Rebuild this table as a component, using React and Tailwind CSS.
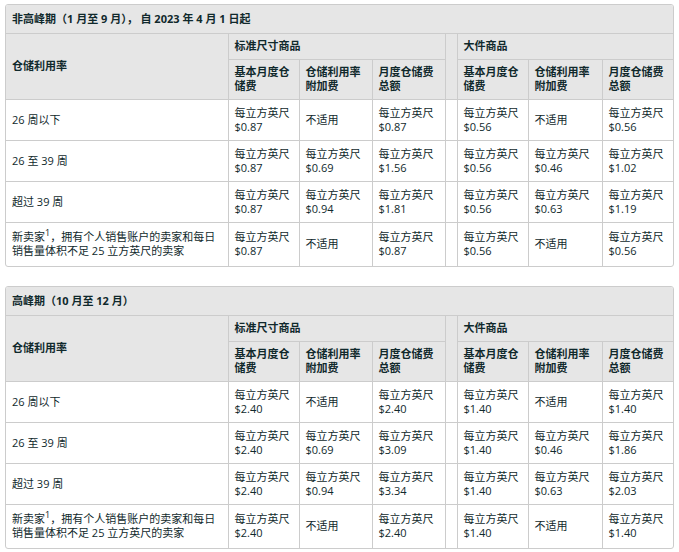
import React from "react";

const NA = "不适用";

const tables = [
  {
    title: "非高峰期（1 月至 9 月）， 自 2023 年 4 月 1 日起",
    rows: [
      ["26 周以下", "$0.87", NA, "$0.87", "$0.56", NA, "$0.56"],
      ["26 至 39 周", "$0.87", "$0.69", "$1.56", "$0.56", "$0.46", "$1.02"],
      ["超过 39 周", "$0.87", "$0.94", "$1.81", "$0.56", "$0.63", "$1.19"],
      ["NEW", "$0.87", NA, "$0.87", "$0.56", NA, "$0.56"],
    ],
  },
  {
    title: "高峰期（10 月至 12 月）",
    rows: [
      ["26 周以下", "$2.40", NA, "$2.40", "$1.40", NA, "$1.40"],
      ["26 至 39 周", "$2.40", "$0.69", "$3.09", "$1.40", "$0.46", "$1.86"],
      ["超过 39 周", "$2.40", "$0.94", "$3.34", "$1.40", "$0.63", "$2.03"],
      ["NEW", "$2.40", NA, "$2.40", "$1.40", NA, "$1.40"],
    ],
  },
];

const cell = "border border-[#cccccc] px-[6px] py-0 align-middle text-left";
const head = "bg-[#e6e6e6] font-bold";

function Val({ v }) {
  if (v === NA) return <span>{NA}</span>;
  return (
    <span>
      每立方英尺
      <br />
      {v}
    </span>
  );
}

function FeeHeads() {
  return (
    <>
      <th className={`${cell} ${head}`}>
        基本月度仓
        <br />
        储费
      </th>
      <th className={`${cell} ${head}`}>
        仓储利用率
        <br />
        附加费
      </th>
      <th className={`${cell} ${head}`}>
        月度仓储费
        <br />
        总额
      </th>
    </>
  );
}

function Table({ title, rows, className }) {
  return (
    <div
      className={`ml-[5px] w-[669px] border border-[#cccccc] rounded-[3px] overflow-hidden ${className}`}
    >
      <table className="w-[667px] table-fixed border-collapse border-hidden">
        <colgroup>
          <col className="w-[222px]" />
          <col className="w-[71px]" />
          <col className="w-[73px]" />
          <col className="w-[73px]" />
          <col className="w-[12px]" />
          <col className="w-[71px]" />
          <col className="w-[74px]" />
          <col className="w-[71px]" />
        </colgroup>
        <thead>
          <tr className="h-[28px]">
            <th colSpan={8} className={`${cell} ${head}`}>
              {title}
            </th>
          </tr>
          <tr className="h-[26px]">
            <th rowSpan={2} className={`${cell} ${head}`}>
              仓储利用率
            </th>
            <th colSpan={3} className={`${cell} ${head}`}>
              标准尺寸商品
            </th>
            <th rowSpan={2} className={`${cell} ${head} px-0`}></th>
            <th colSpan={3} className={`${cell} ${head}`}>
              大件商品
            </th>
          </tr>
          <tr className="h-[40px]">
            <FeeHeads />
            <FeeHeads />
          </tr>
        </thead>
        <tbody>
          {rows.map((r, i) => (
            <tr key={i} className={i === 3 ? "h-[44px]" : "h-[41px]"}>
              <td className={cell}>
                {r[0] === "NEW" ? (
                  <span>
                    新卖家
                    <span className="relative -top-[5px] text-[9px] leading-none">1</span>
                    ，拥有个人销售账户的卖家和每日
                    <br />
                    销售量体积不足 25 立方英尺的卖家
                  </span>
                ) : (
                  r[0]
                )}
              </td>
              <td className={cell}>
                <Val v={r[1]} />
              </td>
              <td className={cell}>
                <Val v={r[2]} />
              </td>
              <td className={cell}>
                <Val v={r[3]} />
              </td>
              <td className={`${cell} px-0`}></td>
              <td className={cell}>
                <Val v={r[4]} />
              </td>
              <td className={cell}>
                <Val v={r[5]} />
              </td>
              <td className={cell}>
                <Val v={r[6]} />
              </td>
            </tr>
          ))}
        </tbody>
      </table>
    </div>
  );
}

export default function App() {
  return (
    <div
      className="w-[679px] h-[552px] bg-white pt-[4px] text-[11px] leading-[14px] text-[#10292c] overflow-hidden"
      style={{ fontFamily: '"Open Sans", "Noto Sans CJK SC", sans-serif' }}
    >
      <Table {...tables[0]} className="" />
      <Table {...tables[1]} className="mt-[19px]" />
    </div>
  );
}
